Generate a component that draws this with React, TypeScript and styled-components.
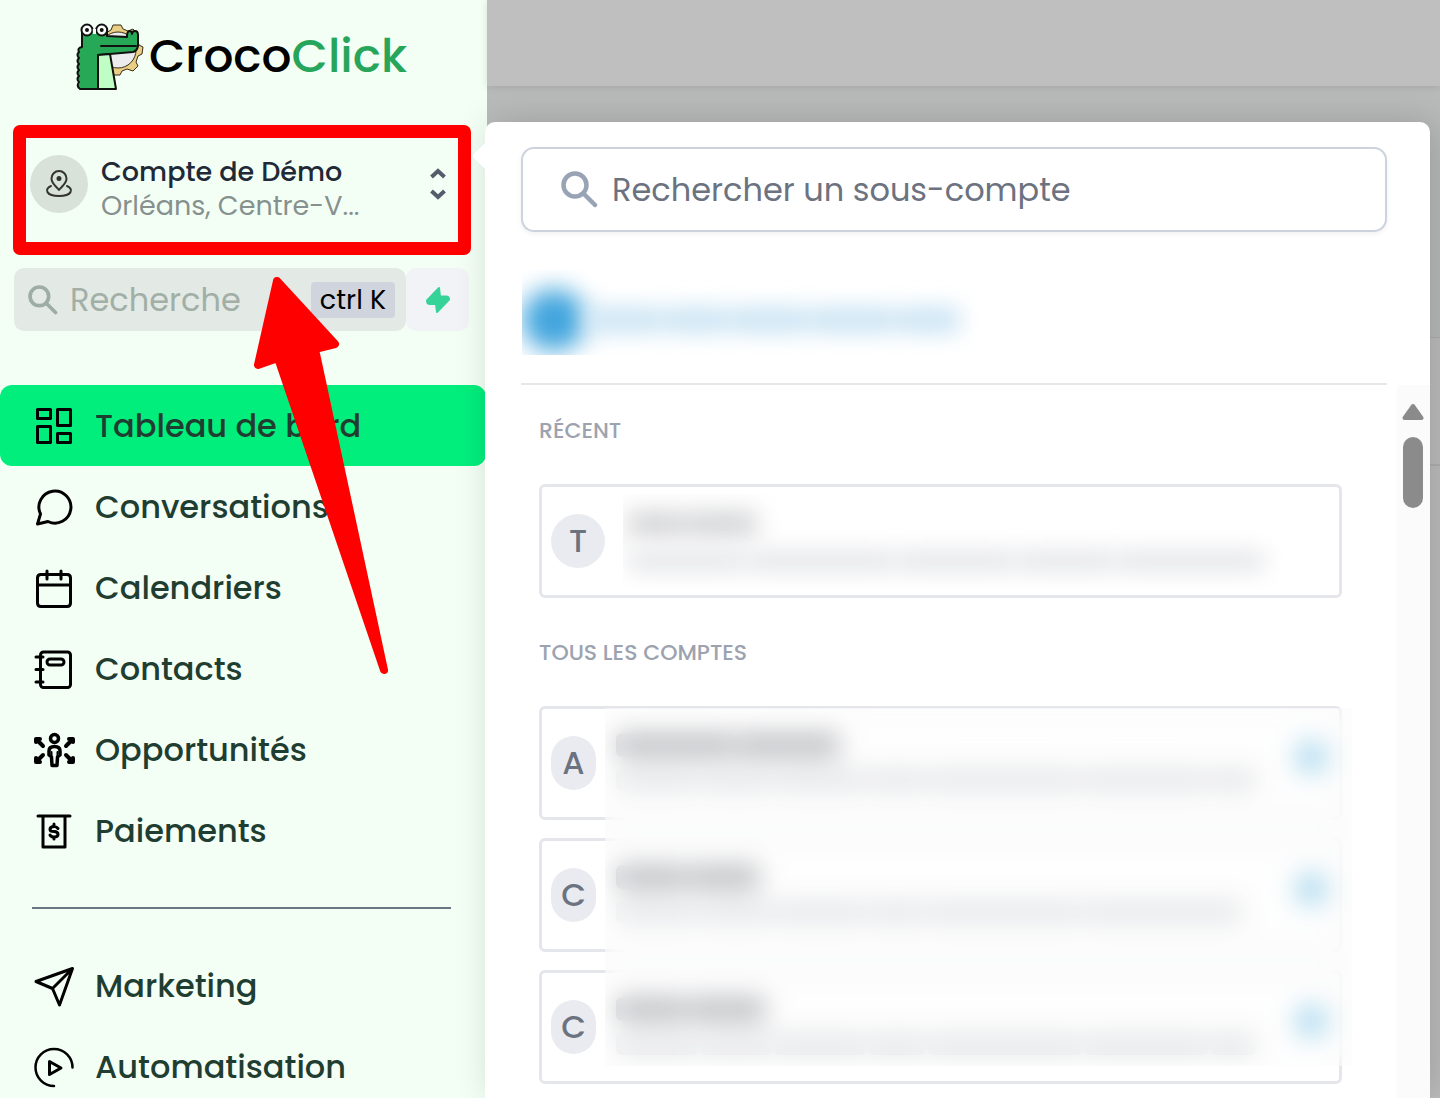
import React from "react";
import styled, { createGlobalStyle } from "styled-components";

const GlobalStyle = createGlobalStyle`
  * { box-sizing: border-box; }
  body {
    margin: 0;
    overflow: hidden;
    font-family: Poppins, Inter, "Open Sans", sans-serif;
    font-feature-settings: "cv11";
  }
  button, input, kbd { font: inherit; font-feature-settings: inherit; }
`;

const Page = styled.div`
  position: relative;
  display: flex;
  height: 100vh;
  overflow: hidden;
`;

/* ---------- Sidebar ---------- */

const Sidebar = styled.aside`
  flex: 0 0 487px;
  background: #f3fff5;
`;

const Brand = styled.a`
  display: flex;
  align-items: center;
  gap: 4px;
  height: 112px;
  padding-left: 76px;
  color: #000;
  font-size: 47px;
  font-weight: 500;
  line-height: 60px;
  text-decoration: none;
`;

const BrandAccent = styled.span`
  color: #27a65b;
`;

const Switcher = styled.button`
  position: relative;
  display: flex;
  align-items: flex-start;
  gap: 13px;
  width: 458px;
  height: 130px;
  margin: 13px 0 13px 13px;
  padding: 30px 24px 0 17px;
  border: 0;
  background: none;
  text-align: left;
`;

const Highlight = styled.span`
  position: absolute;
  inset: 0;
  border: 13px solid #f00;
  border-radius: 7px;
`;

const Pin = styled.span`
  display: grid;
  place-items: center;
  width: 58px;
  height: 58px;
  border-radius: 50%;
  background: #d8e2d9;
`;

const AccountText = styled.span`
  flex: 1;
  display: flex;
  flex-direction: column;
  font-size: 27px;
  line-height: 34px;
`;

const AccountName = styled.span`
  color: #1f2937;
  font-weight: 500;
`;

const AccountPlace = styled.span`
  color: #86918f;
`;

const SearchRow = styled.div`
  display: flex;
  height: 63px;
  margin-left: 14px;
`;

const QuickSearch = styled.label`
  display: flex;
  align-items: center;
  width: 392px;
  padding: 0 11px 0 14px;
  border-radius: 10px;
  background: #e3e9e4;
`;

const QuickInput = styled.input`
  flex: 1;
  min-width: 0;
  padding: 0 0 0 12px;
  border: 0;
  outline: 0;
  background: none;
  font-size: 32px;
  &::placeholder { color: #a1afa7; opacity: 1; }
`;

const Shortcut = styled.kbd`
  width: 84px;
  border-radius: 4px;
  background: #d0d4dc;
  color: #000;
  font-size: 27px;
  line-height: 36px;
  text-align: center;
`;

const BoltButton = styled.button`
  display: grid;
  place-items: center;
  width: 63px;
  padding: 0;
  border: 0;
  border-radius: 10px;
  background: #f2f3f6;
`;

const Nav = styled.nav`
  margin-top: 54px;
`;

const NavLink = styled.a<{ $active?: boolean }>`
  display: flex;
  align-items: center;
  gap: 21px;
  width: 486px;
  height: 81px;
  padding-left: 34px;
  border-radius: 12px;
  background: ${(p) => (p.$active ? "#02ee7c" : "none")};
  color: #1f3d31;
  font-size: 32px;
  font-weight: 500;
  text-decoration: none;
`;

const NavDivider = styled.hr`
  height: 2px;
  margin: 36px 36px 36px 32px;
  border: 0;
  background: #6b7684;
`;

/* ---------- Dimmed page behind the popover ---------- */

const Main = styled.main`
  flex: 1;
  background: #b9bbba;
`;

const TopBar = styled.header`
  height: 86px;
  background: #bfbfbf;
  box-shadow: 0 1px 8px rgba(0, 0, 0, 0.12);
`;

const Panel = styled.section`
  height: 100%;
  margin-top: 251px;
  border-top: 1px solid #adadad;
  background: #bdbdbd;
`;

const PanelHeader = styled.div`
  height: 128px;
  border-bottom: 2px solid #b0b0b0;
`;

/* ---------- Account popover ---------- */

const Popover = styled.div`
  position: absolute;
  top: 122px;
  right: 10px;
  bottom: 0;
  left: 485px;
  display: flex;
  flex-direction: column;
  padding-top: 25px;
  border-radius: 10px 10px 0 0;
  background: #fff;
  box-shadow: 6px 0 36px rgba(0, 0, 0, 0.16);
`;

const Caret = styled.svg`
  position: absolute;
  top: 20px;
  left: -13px;
`;

const PopoverHead = styled.div`
  padding: 0 43px 0 36px;
`;

const AccountSearch = styled.label`
  display: flex;
  align-items: center;
  height: 85px;
  padding: 0 38px;
  border: 2px solid #cdd3de;
  border-radius: 13px;
  box-shadow: 0 2px 5px rgba(0, 0, 0, 0.06);
`;

const AccountInput = styled.input`
  flex: 1;
  min-width: 0;
  padding: 0 0 0 14px;
  border: 0;
  outline: 0;
  background: none;
  font-size: 32px;
  &::placeholder { color: #6b7280; opacity: 1; }
`;

const AgencyRow = styled.div`
  display: flex;
  align-items: center;
  height: 85px;
  margin: 38px 0 28px 1px;
  padding-top: 14px;
  overflow: hidden;
`;

const AgencyDot = styled.span`
  width: 64px;
  height: 62px;
  border-radius: 50%;
  background: #42a5dd;
  filter: blur(12px);
`;

const Smudge = styled.span<{ $width: number; $height: number; $tone: string }>`
  width: ${(p) => p.$width}px;
  height: ${(p) => p.$height}px;
  border-radius: 6px;
  background: ${(p) => p.$tone};
`;

const SmudgeLine = styled.span<{ $blur?: number }>`
  display: flex;
  align-items: center;
  gap: 2px;
  filter: ${(p) => (p.$blur ? `blur(${p.$blur}px)` : "none")};
`;

const PopoverBody = styled.div`
  display: flex;
  flex: 1;
  min-height: 0;
  justify-content: space-between;
`;

const List = styled.div`
  flex: 1;
  padding: 0 55px 0 54px;
  overflow: hidden;
`;

const HeadRule = styled.hr`
  height: 2px;
  margin: 0;
  border: 0;
  background: #e5e7eb;
`;

const GroupTitle = styled.h2`
  margin: 0;
  padding: 30px 0 37px;
  color: #9ca3af;
  font-size: 22px;
  font-weight: 500;
  line-height: 32px;
`;

const Cards = styled.div`
  position: relative;
  display: flex;
  flex-direction: column;
  gap: 18px;
  margin-bottom: 9px;
`;

const Card = styled.button`
  display: flex;
  align-items: center;
  height: 114px;
  padding: 0 9px;
  border: 3px solid #e5e6ec;
  border-radius: 6px;
  background: #fff;
  text-align: left;
`;

const Avatar = styled.span<{ $narrow?: boolean }>`
  flex: none;
  width: ${(p) => (p.$narrow ? 45 : 54)}px;
  border-radius: 27px;
  background: #eaebf1;
  color: #6b7280;
  font-size: 32px;
  font-weight: 500;
  line-height: 54px;
  text-align: center;
`;

const RecentDetails = styled.span`
  display: flex;
  flex: 1;
  flex-direction: column;
  gap: 14px;
  height: 95px;
  margin-left: 18px;
  padding: 18px 0 0 4px;
  overflow: hidden;
`;

const Details = styled.span`
  display: flex;
  flex: 1;
  flex-direction: column;
  gap: 12px;
  margin-left: 20px;
  padding-bottom: 2px;
`;

const LinkDot = styled.span`
  width: 32px;
  height: 34px;
  margin: 0 3px 12px 0;
  border-radius: 50%;
  background: #8fcdea;
`;

const Veil = styled.div`
  position: absolute;
  top: 2px;
  right: -10px;
  bottom: 18px;
  left: 66px;
  background: rgba(252, 253, 253, 0.3);
  backdrop-filter: blur(13px);
`;

const Track = styled.div`
  display: flex;
  flex-direction: column;
  align-items: center;
  gap: 16px;
  width: 33px;
  padding: 18px 2px 0 0;
  background: #fbfbfb;
`;

const Thumb = styled.span`
  width: 20px;
  height: 71px;
  border-radius: 10px;
  background: #8b8b8b;
`;

const Arrow = styled.svg`
  position: absolute;
  top: 270px;
  left: 250px;
  pointer-events: none;
`;

/* ---------- Drawings ---------- */

const CrocLogo = () => (
  <svg width="69" height="72" viewBox="0 0 69 72" aria-hidden="true">
    <g stroke="#3a2c16" strokeWidth="1" fill="#e9cf84">
      <path d="M37 5 L45 5 L47 9 L52 11 L57 9 L62 14 L61 20 L63 25 L67 27 L66 34 L62 36 L60 42 L62 46 L57 51 L51 49 L46 51 L44 55 L37 55 L36 50 L28 45 L24 30 L28 14 L35 10 Z" />
      <circle cx="42" cy="30" r="18" fill="#ececee" />
    </g>
    <g stroke="#111" strokeWidth="2" strokeLinejoin="round" strokeLinecap="round">
      <path
        d="M6 12 V27 Q1 28 3 32 Q0 35 3 38 Q0 41 3 44 Q0 47 3 50 Q0 53 3 56 Q0 59 3 62 Q0 66 4 69 H22 V35 L57 32 Q61 31 62 26 V15 Q62 11 59 11 Q56 11 56 14 Q56 11 53.500 11 Q51 11 51 17 L31 16 V12 Z"
        fill="#27a857"
      />
      <path d="M22 35 L34 34 L40 69 H22 Z" fill="#c0fec5" />
      <path d="M25 26 H60" fill="none" />
      <circle cx="11" cy="10" r="5.500" fill="#fff" />
      <circle cx="25.700" cy="10" r="5.500" fill="#fff" />
      <circle cx="11" cy="10" r="1" />
      <circle cx="25.700" cy="10" r="1" />
    </g>
    <path d="M16.800 9 H20 V14 H16.800 Z" fill="#f3fff5" />
  </svg>
);

const PinIcon = () => (
  <svg width="28" height="28" viewBox="0 0 28 28" fill="none" stroke="#33342f" strokeWidth="2" strokeLinejoin="round" strokeLinecap="round">
    <path d="M14 20 C11 16 6.500 13.500 6.500 8.500 a7.500 7.500 0 0 1 15 0 C21.500 13.500 17 16 14 20 Z" />
    <circle cx="14" cy="8.500" r="1.500" fill="#33342f" />
    <path d="M6 16 C-1 19 1 26 14 26 C27 26 29 19 22 16" />
  </svg>
);

const UpDownIcon = () => (
  <svg width="18" height="58" viewBox="0 -11 18 58" fill="none" stroke="#535d6b" strokeWidth="4">
    <path d="M2.500 11 L9 5 L15.500 11 M2.500 25 L9 31 L15.500 25" />
  </svg>
);

const SearchIcon = ({ size, color }: { size: number; color: string }) => (
  <svg width={size} height={size} viewBox="0 0 37 37" fill="none" stroke={color} strokeWidth="4.500" strokeLinecap="round">
    <circle cx="14" cy="14" r="11.500" />
    <path d="M22.500 22.500 L34 34" />
  </svg>
);

const BoltIcon = () => (
  <svg width="26" height="28" viewBox="0 0 26 28" fill="#36d399" stroke="#36d399" strokeWidth="2" strokeLinejoin="round">
    <path d="M14 2 L2 14.500 Q2 18 5 18 H11 L12 26 L24 13.500 Q24 10.500 21 10.500 H15 Z" />
  </svg>
);

const icons: Record<string, React.ReactNode> = {
  dashboard: (
    <>
      <rect x="3.500" y="3.500" width="13" height="9" />
      <rect x="23.500" y="3.500" width="13" height="16" />
      <rect x="3.500" y="20.500" width="13" height="16" />
      <rect x="23.500" y="27.500" width="13" height="9" />
    </>
  ),
  chat: <path d="M3.500 37 L6.500 27 A16 16 0 1 1 14 34.500 Z" />,
  calendar: <path d="M7 6.500 H33 Q36.500 6.500 36.500 10 V35 Q36.500 38.500 33 38.500 H7 Q3.500 38.500 3.500 35 V10 Q3.500 6.500 7 6.500 Z M3.500 17 H36.500 M13 3 V11 M27 3 V11" />,
  contacts: (
    <>
      <rect x="6.500" y="3" width="30" height="35.500" rx="3" />
      <rect x="13" y="10" width="17" height="6" rx="3" />
      <path d="M2 8 H9 M2 20.500 H9 M2 33 H9" />
    </>
  ),
  people: (
    <>
      <circle cx="20.500" cy="8.500" r="4" strokeWidth="3.500" />
      <path d="M18 35.500 L17.500 27 L15 25 V21 Q15 16.500 20.500 16.500 Q26 16.500 26 21 V25 L23.500 27 L23 35.500 Z" strokeWidth="3.500" />
      <path d="M17.500 22 V28 M23.500 22 V28" strokeWidth="2" />
      <path d="M2 12 V9 H6 M3 10 L9 16 M35 9 H39 V12 M38 10 L32 16 M2 28 V32 H6 M3 31 L9 25 M35 32 H39 V28 M38 31 L32 25" strokeWidth="4" />
    </>
  ),
  payments: (
    <>
      <path d="M4 5 H36 M9 5 V36 H31 V5" />
      <path d="M24 17.500 Q22.500 15.500 20 15.500 Q16 15.500 16 18.500 Q16 20.500 20 20.500 Q24 20.500 24 23.500 Q24 26 20 26 Q17 26 16 24 M20 13 V15.500 M20 26 V28" />
    </>
  ),
  send: <path d="M2 15.500 L38.500 2.500 L25.500 39 L18.500 22.500 Z M18.500 22.500 L38 3" />,
  automation: (
    <>
      <path strokeWidth="2.500" d="M38.500 20.500 A18.500 18.500 0 1 0 20 39" />
      <path d="M15.500 14.500 L27 21 L15.500 27.500 Z" />
    </>
  ),
};

const NavIcon = ({ name }: { name: string }) => (
  <svg width="40" height="40" viewBox="0 0 40 40" overflow="visible" fill="none" stroke="#000" strokeWidth="3" strokeLinejoin="round" strokeLinecap="round" aria-hidden="true">
    {icons[name]}
  </svg>
);

/* ---------- Data ---------- */

const primaryNav = [
  ["dashboard", "Tableau de bord"],
  ["chat", "Conversations"],
  ["calendar", "Calendriers"],
  ["contacts", "Contacts"],
  ["people", "Opportunités"],
  ["payments", "Paiements"],
];

const secondaryNav = [
  ["send", "Marketing"],
  ["automation", "Automatisation"],
];

const accounts = [
  { letter: "A", name: [118, 104], address: [82, 72, 92, 58, 154, 124, 46] },
  { letter: "C", name: [70, 72], address: [82, 72, 92, 58, 154, 158] },
  { letter: "C", name: [70, 78], address: [82, 72, 92, 58, 154, 124, 46] },
];

const Words = ({ widths, height, tone, blur }: { widths: number[]; height: number; tone: string; blur?: number }) => (
  <SmudgeLine $blur={blur}>
    {widths.map((w, i) => (
      <Smudge key={i} $width={w} $height={height} $tone={tone} />
    ))}
  </SmudgeLine>
);

export default function App() {
  return (
    <Page>
      <GlobalStyle />
      <Sidebar>
        <Brand href="#">
          <CrocLogo />
          <span>Croco<BrandAccent>Click</BrandAccent></span>
        </Brand>
        <Switcher type="button">
          <Pin><PinIcon /></Pin>
          <AccountText>
            <AccountName>Compte de Démo</AccountName>
            <AccountPlace>Orléans, Centre-V...</AccountPlace>
          </AccountText>
          <UpDownIcon />
          <Highlight />
        </Switcher>
        <SearchRow>
          <QuickSearch>
            <SearchIcon size={30} color="#9dada4" />
            <QuickInput placeholder="Recherche" aria-label="Recherche" />
            <Shortcut>ctrl K</Shortcut>
          </QuickSearch>
          <BoltButton type="button" aria-label="Actions rapides"><BoltIcon /></BoltButton>
        </SearchRow>
        <Nav>
          {primaryNav.map(([icon, label], i) => (
            <NavLink key={label} href="#" $active={i === 0}>
              <NavIcon name={icon} />
              {label}
            </NavLink>
          ))}
          <NavDivider />
          {secondaryNav.map(([icon, label]) => (
            <NavLink key={label} href="#">
              <NavIcon name={icon} />
              {label}
            </NavLink>
          ))}
        </Nav>
      </Sidebar>

      <Main>
        <TopBar />
        <Panel><PanelHeader /></Panel>
      </Main>

      <Popover role="dialog" aria-label="Comptes">
        <Caret width="14" height="28" viewBox="0 0 14 28" fill="#fff"><path d="M14 0 L2 12 Q0 14 2 16 L14 28 Z" /></Caret>
        <PopoverHead>
          <AccountSearch>
            <SearchIcon size={37} color="#98a3b5" />
            <AccountInput placeholder="Rechercher un sous-compte" aria-label="Rechercher un sous-compte" />
          </AccountSearch>
          <AgencyRow>
            <AgencyDot />
            <Words widths={[76, 64, 78, 84, 64]} height={26} tone="#cbe4f4" blur={11} />
          </AgencyRow>
          <HeadRule />
        </PopoverHead>
        <PopoverBody>
          <List>
            <GroupTitle>RÉCENT</GroupTitle>
            <Cards>
              <Card type="button">
                <Avatar>T</Avatar>
                <RecentDetails>
                  <Words widths={[58, 70]} height={24} tone="#d0d1d3" blur={12} />
                  <Words widths={[118, 148, 118, 98, 148]} height={22} tone="#e6e7ea" blur={11} />
                </RecentDetails>
              </Card>
            </Cards>
            <GroupTitle>TOUS LES COMPTES</GroupTitle>
            <Cards>
              {accounts.map((a, i) => (
                <Card type="button" key={i}>
                  <Avatar $narrow>{a.letter}</Avatar>
                  <Details>
                    <Words widths={a.name} height={24} tone="#a4a6ab" />
                    <Words widths={a.address} height={22} tone="#dcdee1" />
                  </Details>
                  <LinkDot />
                </Card>
              ))}
              <Veil />
            </Cards>
          </List>
          <Track>
            <svg width="22" height="18" viewBox="0 0 22 18" fill="#8b8b8b" stroke="#8b8b8b" strokeWidth="4" strokeLinejoin="round">
              <path d="M11 3 L19.500 15 H2.500 Z" />
            </svg>
            <Thumb />
          </Track>
        </PopoverBody>
      </Popover>

      <Arrow width="144" height="412" viewBox="250 270 144 412" fill="#f00" stroke="#f00" strokeWidth="8" strokeLinejoin="round" aria-hidden="true">
        <path d="M277 281 L335 344 L315 349 L384 670 L278 358 L258 365 Z" />
      </Arrow>
    </Page>
  );
}
